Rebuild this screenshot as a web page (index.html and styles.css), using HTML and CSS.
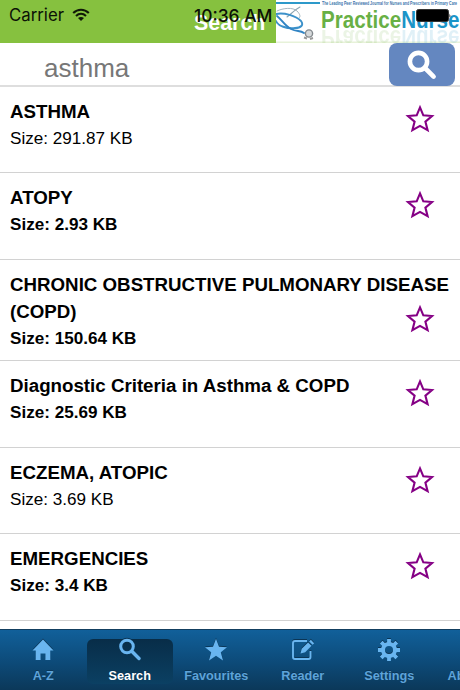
FILE: index.html
```html
<!DOCTYPE html>
<html lang="en">
<head>
	<meta charset="UTF-8">
	<title>Search</title>
	<link rel="stylesheet" href="styles.css">
</head>
<body>
	<!-- shared icons -->
	<svg class="defs">
		<symbol id="star" viewBox="0 0 30 30">
			<path d="M15 3.4L18.3 11.3L27 12L20.4 17.6L22.6 26.2L15 21.9L7.4 26.2L9.6 17.6L3 12L11.7 11.3Z" fill="none" stroke="#850085" stroke-width="2.1"/>
		</symbol>
		<symbol id="search" viewBox="0 0 30 30">
			<circle cx="11.5" cy="11.5" r="8.6" fill="none" stroke="currentColor" stroke-width="4.6"/>
			<path d="M18 18L26.6 26.6" stroke="currentColor" stroke-width="4.6" stroke-linecap="round"/>
		</symbol>
	</svg>

	<div class="header">
		<h1 class="title">Search</h1>
		<svg class="logo" viewBox="0 0 184 43">
			<rect width="184" height="43" fill="#fff"/>
			<rect y="2" width="44" height="2" fill="#2d99ca"/>
			<rect y="41.5" width="184" height="1.5" fill="#e7f2d9"/>
			<text class="tagline" x="46" y="4.6" textLength="135" lengthAdjust="spacingAndGlyphs">The Leading Peer Reviewed Journal for Nurses and Prescribers in Primary Care</text>
			<g fill="none" stroke-linecap="round">
				<path d="M1 11C7 8 17 7 21 11C24 14 25 17 23 18" stroke="#a9b7c0" stroke-width="1"/>
				<path d="M24 7C20 9 16 13 11 17" stroke="#8da4b1" stroke-width="1.1"/>
				<path d="M0 14C8 12 20 16 25 21C28 25 25 28 19 28C11 29 2 26 0 21" stroke="#3c91ca" stroke-width="1.9"/>
				<path d="M1 16C6 20 9 26 15 29C21 32 24 30 28 33" stroke="#3184c4" stroke-width="1.9"/>
			</g>
			<circle cx="33" cy="33.5" r="3.6" fill="#d6d9db" stroke="#83898d" stroke-width="1.4"/>
			<path d="M28 37.5L31 38.5M34 39L37 38" stroke="#999" stroke-width="2"/>
			<text class="brand" x="45" y="27.5" textLength="138.5" lengthAdjust="spacingAndGlyphs"><tspan fill="#68b045">Practice</tspan><tspan fill="#1b94c8">Nurse</tspan></text>
			<text class="brand reflection" x="45" y="-30" transform="scale(1 -1)" textLength="138.5" lengthAdjust="spacingAndGlyphs"><tspan fill="#69ad42">Practice</tspan><tspan fill="#1b94c8">Nurse</tspan></text>
		</svg>
		<div class="status">
			<span class="carrier">Carrier</span>
			<svg class="wifi" viewBox="0 0 18 14">
				<path d="M1.2 5.1C5.7.7 12.3.7 16.8 5.1M4 8C7 5.2 11 5.2 14 8" fill="none" stroke="#101808" stroke-width="2.1"/>
				<path d="M6 10.1Q9 7.9 12 10.1L9 13Z" fill="#101808"/>
			</svg>
			<span class="time">10:36 AM</span>
			<svg class="battery" viewBox="0 0 35 13">
				<rect x=".5" y=".5" width="32" height="12" rx="2" fill="#000" stroke="#333"/>
				<path d="M33.5 4.5Q35 6.5 33.5 8.5Z" fill="#000"/>
			</svg>
		</div>
	</div>

	<div class="searchbar">
		<span class="query">asthma</span>
		<div class="searchbtn"><svg><use href="#search"/></svg></div>
	</div>

	<ul class="list">
		<li>
			<h3>ASTHMA</h3>
			<p class="read">Size: 291.87 KB</p>
			<svg class="fav"><use href="#star"/></svg>
		</li>
		<li>
			<h3>ATOPY</h3>
			<p>Size: 2.93 KB</p>
			<svg class="fav"><use href="#star"/></svg>
		</li>
		<li class="tall">
			<h3>CHRONIC OBSTRUCTIVE PULMONARY DISEASE (COPD)</h3>
			<p>Size: 150.64 KB</p>
			<svg class="fav"><use href="#star"/></svg>
		</li>
		<li>
			<h3>Diagnostic Criteria in Asthma &amp; COPD</h3>
			<p>Size: 25.69 KB</p>
			<svg class="fav"><use href="#star"/></svg>
		</li>
		<li>
			<h3>ECZEMA, ATOPIC</h3>
			<p class="read">Size: 3.69 KB</p>
			<svg class="fav"><use href="#star"/></svg>
		</li>
		<li>
			<h3>EMERGENCIES</h3>
			<p>Size: 3.4 KB</p>
			<svg class="fav"><use href="#star"/></svg>
		</li>
	</ul>

	<div class="tabs">
		<div class="tab">
			<svg viewBox="0 0 24 24"><path d="M12 1.5L22.5 12.5H19.3V22H14.4V15.5H9.6V22H4.7V12.5H1.5Z" fill="currentColor"/></svg>
			<span>A-Z</span>
		</div>
		<div class="tab active">
			<svg viewBox="0 0 24 24"><circle cx="9" cy="8.5" r="6.3" fill="none" stroke="currentColor" stroke-width="3"/><path d="M13.8 13.3L21 20.5" stroke="currentColor" stroke-width="3.4" stroke-linecap="round"/></svg>
			<span>Search</span>
		</div>
		<div class="tab">
			<svg viewBox="0 0 24 24"><path d="M12 .8L15 8.8L23 9.2L16.8 14.2L19 22.4L12 17.8L5 22.4L7.2 14.2L1 9.2L9 8.8Z" fill="currentColor"/></svg>
			<span>Favourites</span>
		</div>
		<div class="tab">
			<svg viewBox="0 0 24 24"><path d="M16 3H4Q2 3 2 5V19Q2 21 4 21H17.5Q19.5 21 19.5 19V13" fill="none" stroke="currentColor" stroke-width="1.9"/><path d="M9.5 15.5L10.7 10.8L17.1 4.5L20.5 7.8L14.2 14.2ZM18.2 3.4L19.8 1.8L23.2 5.2L21.6 6.8Z" fill="currentColor"/></svg>
			<span>Reader</span>
		</div>
		<div class="tab">
			<svg viewBox="0 0 24 24">
				<circle cx="12" cy="12" r="6" fill="none" stroke="currentColor" stroke-width="4"/>
				<g stroke="currentColor" stroke-width="3.8">
					<path d="M12 1V5.5M12 18.5V23M1 12H5.5M18.5 12H23M4.2 4.2L7.4 7.4M16.6 16.6L19.8 19.8M4.2 19.8L7.4 16.6M16.6 7.4L19.8 4.2"/>
				</g>
			</svg>
			<span>Settings</span>
		</div>
		<div class="tab">
			<svg viewBox="0 0 24 24"></svg>
			<span>About Us</span>
		</div>
	</div>
</body>
</html>
```
FILE: styles.css
```css
*{
	margin:0;
	padding:0;
	box-sizing: border-box;
}
body{
	width:460px;
	height:690px;
	overflow: hidden;
	display: flex;
	flex-direction: column;
	background-color: #fff;
	font-family: "Liberation Sans", Arial, sans-serif;
}
.defs{
	display: none;
}
.header{
	position: relative;
	display: flex;
	flex: none;
	height:43px;
	background-color: #86c13f;
}
.title{
	width:276px;
	padding-left: 194px;
	color:#fff;
	font-size: 21.4px;
	line-height: 46px;
}
.logo{
	width:184px;
	height:43px;
}
.tagline{
	fill:#3973ab;
	font-size: 4.6px;
	font-weight: bold;
}
.brand{
	font-family: "Liberation Sans", Arial, sans-serif;
	font-size: 23.5px;
	font-weight: bold;
}
.reflection{
	opacity: .13;
}
/* phone status bar lies over the header */
.status{
	position: absolute;
	top:0;
	left:0;
	width:460px;
	height:30px;
	padding: 0 9px;
	display: flex;
	align-items: center;
	font-family: Inter, sans-serif;
	color:#0c1206;
}
.carrier{
	width:63px;
	font-size: 16.8px;
}
.wifi{
	width:18px;
	height:14px;
}
.time{
	margin-left: 104px;
	width:80px;
	font-size: 17.4px;
	font-weight: 500;
	white-space: nowrap;
}
.battery{
	margin-left: auto;
	width:35px;
	height:13px;
}
.searchbar{
	display: flex;
	flex: none;
	justify-content: space-between;
	height:44px;
	padding: 0 5px 0 44px;
	border-bottom: 2px solid #dedede;
}
.query{
	color:#777;
	font-size: 26px;
	line-height: 50px;
}
.searchbtn{
	display: flex;
	align-items: center;
	justify-content: center;
	width:66px;
	height:43px;
	border-radius: 8px;
	background-color: #6487c0;
	color:#fff;
}
.searchbtn svg{
	width:30px;
	height:30px;
}
.list{
	flex: 1;
	list-style: none;
}
.list li{
	position: relative;
	height:86.4px;
	padding: 11px 0 0 10px;
	border-bottom: 1px solid #d2d2d2;
}
.list .tall{
	height:101.6px;
}
.list h3{
	color:#000;
	font-size: 18.73px;
	line-height: 27px;
}
.list p{
	color:#000;
	font-size: 17.1px;
	font-weight: bold;
	line-height: 27px;
}
.list .read{
	font-weight: normal;
}
.fav{
	position: absolute;
	top:17px;
	right:25px;
	width:30px;
	height:30px;
}
.tall .fav{
	top:44px;
}
.tabs{
	display: flex;
	flex: none;
	height:61px;
	padding-top: 9px;
	overflow: hidden;
	border-top: 1px solid #123e5f;
	background: linear-gradient(#11609a, #0d4a78 55%, #0b3859);
}
.tab{
	flex: none;
	display: flex;
	flex-direction: column;
	align-items: center;
	width:86.5px;
	height:45px;
	color:#69b5f0;
}
.tab svg{
	width:24px;
	height:24px;
	margin-top: -1px;
	filter: drop-shadow(0 -1px 0 #0a3556);
}
.tab span{
	margin-top: 6px;
	color:#5ea3d9;
	font-size: 12.7px;
	font-weight: bold;
	line-height: 16px;
	text-shadow: 0 -1px 0 #0a3556;
}
.tab.active span{
	color:#fff;
}
.active{
	border-radius: 6px;
	background: linear-gradient(#082d48, #0b4063);
}
```
